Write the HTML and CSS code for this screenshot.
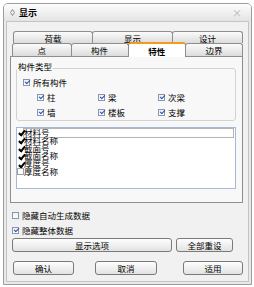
FILE: index.html
```html
<!DOCTYPE html>
<html lang="zh">
<head>
    <meta charset="UTF-8">
    <title>显示</title>
    <link rel="stylesheet" href="styles.css">
</head>
<body>
    <div class="window">
        <div class="titlebar">
            <svg class="ticon" width="5" height="7" viewBox="0 0 5 7"><path d="M2.5 0.5 L4.5 3.5 L2.5 6.5 L0.5 3.5 Z" fill="none" stroke="#8a8a8a" stroke-width="1"/></svg>
            <span class="title">显示</span>
            <span class="close">×</span>
        </div>
        <div class="client">
            <!-- 选项卡 -->
            <div class="tabs">
                <div class="tabrow back">
                    <div class="tab t1">荷载</div>
                    <div class="tab t2">显示</div>
                    <div class="tab t3">设计</div>
                </div>
                <div class="tabrow front">
                    <div class="tab f1">点</div>
                    <div class="tab f2">构件</div>
                    <div class="tab f3 active">特性</div>
                    <div class="tab f4">边界</div>
                </div>
            </div>

            <div class="panel">
                <fieldset class="group">
                    <legend>构件类型</legend>
                    <div class="row all"><span class="cb on"></span>所有构件</div>
                    <div class="grid">
                        <div class="row"><span class="cb on"></span>柱</div>
                        <div class="row"><span class="cb on"></span>梁</div>
                        <div class="row"><span class="cb on"></span>次梁</div>
                        <div class="row"><span class="cb on"></span>墙</div>
                        <div class="row"><span class="cb on"></span>楼板</div>
                        <div class="row"><span class="cb on"></span>支撑</div>
                    </div>
                </fieldset>

                <div class="listbox">
                    <div class="item focus"><span class="lm on"></span><span class="name">材料号</span></div>
                    <div class="item"><span class="lm on"></span><span class="name">材料名称</span></div>
                    <div class="item"><span class="lm on"></span><span class="name">截面号</span></div>
                    <div class="item"><span class="lm on"></span><span class="name">截面名称</span></div>
                    <div class="item"><span class="lm on"></span><span class="name">厚度号</span></div>
                    <div class="item"><span class="lm off"></span><span class="name">厚度名称</span></div>
                </div>
            </div>

            <div class="row opt first"><span class="cb"></span>隐藏自动生成数据</div>
            <div class="row opt"><span class="cb on"></span>隐藏整体数据</div>

            <div class="btnrow">
                <button class="btn wide">显示选项</button>
                <button class="btn reset">全部重设</button>
            </div>
            <div class="btnrow bottom">
                <button class="btn ok">确认</button>
                <button class="btn cancel">取消</button>
                <button class="btn apply">适用</button>
            </div>
        </div>
    </div>
</body>
</html>
```

FILE: styles.css
```css
* {
    box-sizing: border-box;
}
body {
    margin: 0;
    background-color: #fff;
    font-family: "Noto Sans CJK SC", "Noto Sans", sans-serif;
    font-size: 8.5px;
    color: #000;
}
.window {
    margin: 3px 0 0 3px;
    width: 249px;
    height: 282px;
    border: 1px solid #9c9c9c;
    border-radius: 5px 5px 0 0;
    background-color: #e9e9e9;
    display: flex;
    flex-direction: column;
}
.titlebar {
    height: 17px;
    flex-shrink: 0;
    display: flex;
    align-items: center;
    padding: 0 9px 0 6px;
    background: linear-gradient(#fdfdfd, #e4e4e4);
    border-radius: 4px 4px 0 0;
}
.title {
    flex: 1;
    margin-left: 4px;
    font-weight: bold;
    font-size: 9px;
}
.close {
    color: #b4b4b4;
    font-size: 10px;
}
.client {
    flex: 1;
    margin: 0 2px 2px;
    border: 1px solid #c4c4c4;
    background-color: #f1f1f1;
    padding: 9px 5px 0 3px;
}

/* tabs */
.tabs {
    margin-bottom: -1px;
}
.tabrow {
    display: flex;
}
.tabrow.back {
    height: 12px;
    margin-left: 3px;
}
.tabrow.front {
    height: 15px;
    margin: -1px 0 0 2px;
    align-items: flex-start;
}
.tab {
    height: 12px;
    display: flex;
    align-items: center;
    justify-content: center;
    border: 1px solid #8e8e8e;
    border-bottom: none;
    border-radius: 3px 3px 0 0;
    background: linear-gradient(#fbfbfb, #dcdcdc);
    margin-left: -1px;
}
.tab:first-child {
    margin-left: 0;
}
.front .tab {
    height: 13px;
    margin-top: 1px;
}
.front .tab.active {
    height: 15px;
    margin-top: 0;
    border-top: 2px solid #f49a1c;
    background: #fff;
    font-weight: bold;
}
.t1 { width: 80px; }
.t2 { width: 81px; }
.t3 { width: 71px; }
.f1 { width: 60px; }
.f2 { width: 58px; }
.f3 { width: 59px; }
.f4 { width: 58px; }

.panel {
    width: 233px;
    height: 147px;
    border: 1px solid #8e8e8e;
    background-color: #f8f8f8;
}
.group {
    margin: 3px 0 0 5px;
    width: 220px;
    border: 1px solid #d2d2d2;
    border-radius: 3px;
    padding: 0 0 3px 0;
    min-inline-size: 0;
}
.group legend {
    padding: 2px 1px 5px;
    line-height: 9px;
}
.row {
    display: flex;
    align-items: center;
    height: 10px;
    white-space: nowrap;
}
.cb {
    position: relative;
    width: 7px;
    height: 7px;
    margin-right: 3px;
    border: 1px solid #8797b0;
    background: linear-gradient(#f0f0f0, #fff);
}
.cb.on::after {
    content: "";
    position: absolute;
    left: 1.5px;
    top: -0.5px;
    width: 2px;
    height: 4px;
    border: solid #2452b4;
    border-width: 0 1.5px 1.5px 0;
    transform: rotate(45deg);
}
.group .all {
    margin: 1px 0 0 6px;
}
.grid {
    display: grid;
    grid-template-columns: 61px 60px 1fr;
    row-gap: 5px;
    margin: 5px 0 0 20px;
}

.listbox {
    margin: 6px 0 0 5px;
    width: 220px;
    height: 62px;
    border: 1px solid #a8b8d6;
    background-color: #fff;
    padding-top: 1px;
}
.item {
    display: flex;
    align-items: center;
    height: 7.8px;
    line-height: 7.8px;
    white-space: nowrap;
}
.lm {
    position: relative;
    width: 7px;
    height: 7px;
    margin-right: 0;
    border: 1px solid transparent;
    flex-shrink: 0;
}
.lm.off {
    border-color: #a0a0a0;
}
.lm.on::after {
    content: "";
    position: absolute;
    left: 1.5px;
    top: -1px;
    width: 2px;
    height: 5px;
    border: solid #000;
    border-width: 0 2px 2px 0;
    transform: rotate(40deg);
}
.item .name {
    flex: 1;
    margin-right: 2px;
}
.item.focus .name {
    outline: 1px solid #b4b4b4;
}

.opt {
    margin: 5px 0 0 2px;
}
.opt.first {
    margin-top: 7px;
}
.btnrow {
    display: flex;
    height: 14px;
    margin: 3px 0 0 2px;
}
.btnrow.bottom {
    margin: 9px 0 0 3px;
}
.btn {
    height: 14px;
    padding: 0;
    font: inherit;
    color: #000;
    border: 1px solid #7a7a7a;
    border-radius: 3px;
    background: linear-gradient(#fefefe, #e2e2e2);
}
.wide { width: 160px; }
.reset { width: 57px; margin-left: 4px; }
.ok { width: 61px; }
.cancel { width: 62px; margin-left: 21px; }
.apply { width: 60px; margin-left: 26px; }
```
